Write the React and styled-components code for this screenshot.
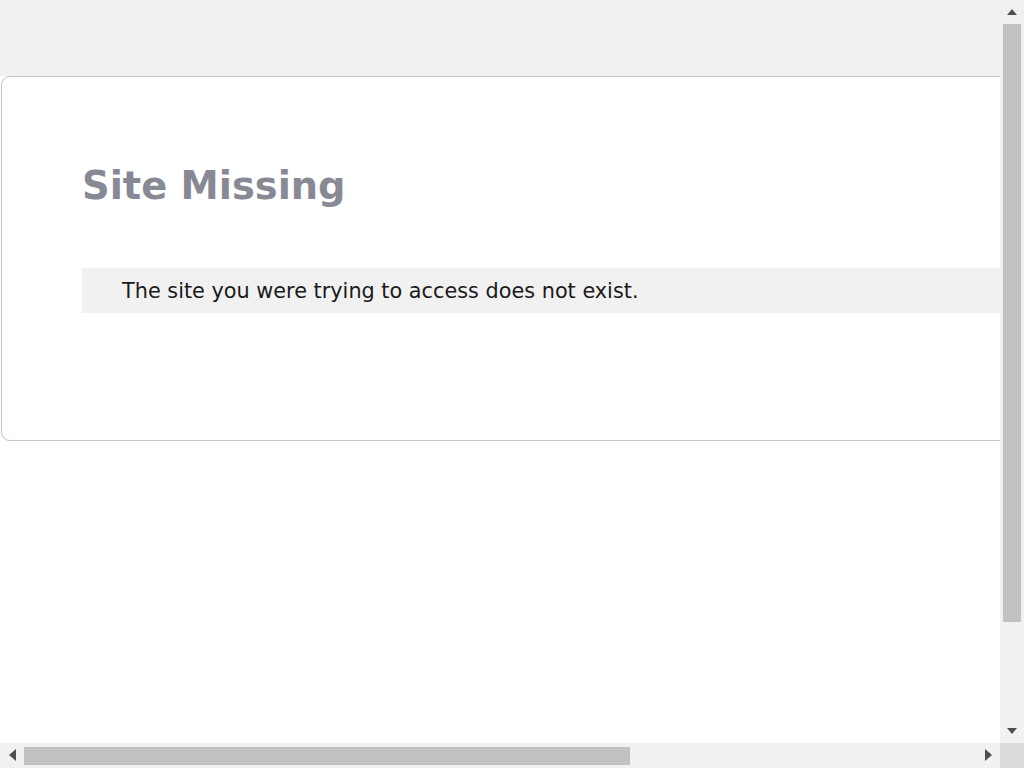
import React from "react";
import styled, { createGlobalStyle, css } from "styled-components";

const GlobalStyle = createGlobalStyle`
  html, body {
    margin: 0;
    padding: 0;
    background: #ffffff;
    overflow: hidden;
  }
  body {
    font-family: "DejaVu Sans", "Liberation Sans", sans-serif;
    color: #1a1a1a;
  }
`;

const Page = styled.div`
  width: 1571px;
  min-height: 864px;
  background: #ffffff;
`;

const TopBand = styled.div`
  height: 76px;
  background: #f1f1f1;
`;

const Card = styled.section`
  margin-left: 1px;
  box-sizing: border-box;
  border: 1px solid #c6c6c6;
  border-radius: 9px;
  box-shadow: 0 0 1px rgba(0, 0, 0, 0.15);
  background: #ffffff;
  padding: 86px 0 127px 80px;
`;

const Title = styled.h1`
  margin: 0 0 60px;
  font-size: 38.4px;
  font-weight: 700;
  line-height: normal;
  color: #878a95;
`;

const Message = styled.p`
  margin: 0;
  padding: 11px 40px 10px;
  background: #f1f1f1;
  font-size: 20.8px;
  line-height: normal;
  color: #1a1a1a;
`;

/* Browser scrollbars drawn over the page */
const ScrollbarV = styled.div`
  position: fixed;
  top: 0;
  right: 0;
  width: 24px;
  height: 743px;
  background: #f1f1f1;
  display: flex;
  flex-direction: column;
`;

const ScrollbarH = styled.div`
  position: fixed;
  left: 0;
  bottom: 0;
  width: 1000px;
  height: 25px;
  background: #f1f1f1;
  display: flex;
  flex-direction: row;
`;

const Corner = styled.div`
  position: fixed;
  right: 0;
  bottom: 0;
  width: 24px;
  height: 25px;
  background: #dcdcdc;
`;

const ArrowButton = styled.div`
  flex: 0 0 24px;
  width: 24px;
  height: 24px;
  display: flex;
  align-items: center;
  justify-content: center;
`;

const triangles = {
  up: css`
    border-left: 5px solid transparent;
    border-right: 5px solid transparent;
    border-bottom: 6px solid #505050;
  `,
  down: css`
    border-left: 5px solid transparent;
    border-right: 5px solid transparent;
    border-top: 6px solid #505050;
  `,
  left: css`
    border-top: 6px solid transparent;
    border-bottom: 6px solid transparent;
    border-right: 7px solid #505050;
  `,
  right: css`
    border-top: 6px solid transparent;
    border-bottom: 6px solid transparent;
    border-left: 7px solid #505050;
  `,
};

const Triangle = styled.span`
  width: 0;
  height: 0;
  ${({ $dir }) => triangles[$dir]}
`;

const Track = styled.div`
  flex: 1;
  display: flex;
  flex-direction: ${({ $vertical }) => ($vertical ? "column" : "row")};
  align-items: center;
`;

const Thumb = styled.div`
  background: #c1c1c1;
  ${({ $vertical }) =>
    $vertical
      ? css`
          width: 18px;
          height: 598px;
        `
      : css`
          height: 18px;
          width: 606px;
          margin-top: 1px;
        `}
`;

export default function App() {
  return (
    <>
      <GlobalStyle />
      <Page>
        <TopBand />
        <Card>
          <Title>Site Missing</Title>
          <Message>The site you were trying to access does not exist.</Message>
        </Card>
      </Page>

      <ScrollbarV aria-hidden="true">
        <ArrowButton>
          <Triangle $dir="up" />
        </ArrowButton>
        <Track $vertical>
          <Thumb $vertical />
        </Track>
        <ArrowButton>
          <Triangle $dir="down" />
        </ArrowButton>
      </ScrollbarV>
      <ScrollbarH aria-hidden="true">
        <ArrowButton>
          <Triangle $dir="left" />
        </ArrowButton>
        <Track>
          <Thumb />
        </Track>
        <ArrowButton>
          <Triangle $dir="right" />
        </ArrowButton>
      </ScrollbarH>
      <Corner aria-hidden="true" />
    </>
  );
}
